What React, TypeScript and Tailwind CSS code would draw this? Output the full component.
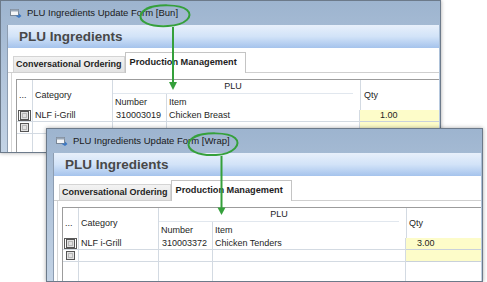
import React from "react";

const FONT = "font-['Liberation_Sans',Arial,sans-serif]";

function FormIcon() {
  return (
    <svg width="12" height="9" viewBox="0 0 12 9" className="shrink-0">
      <rect x="0.5" y="0.5" width="8" height="6" fill="#f4f6f8" stroke="#7a8796" />
      <rect x="0.5" y="0.5" width="8" height="2" fill="#9aa8b8" />
      <path d="M5 6.5 H9 V4.5 L11.5 7 L9 9 Z" fill="#3b78c4" />
    </svg>
  );
}

function RowSel({ focus }: { focus?: boolean }) {
  return (
    <div className="flex h-full items-center justify-center">
      <div className={focus ? "border border-[#5a5a5a] px-[1px]" : "p-[1px]"}>
        <div className="h-[9px] w-[9px] border border-[#555] bg-[#e2e2e2] p-[1px]">
          <div className="h-full w-full border border-[#b8b8b8]" />
        </div>
      </div>
    </div>
  );
}

type WinProps = {
  pos: string;
  tag: string;
  num: string;
  item: string;
  qty: string;
  qtyPad: string;
  qtyLabelPad: string;
};

function Win({ pos, tag, num, item, qty, qtyPad, qtyLabelPad }: WinProps) {
  const v = "border-r border-[#d3dae2]";
  const rowB = "border-b border-[#c9d1da]";
  return (
    <div
      className={`absolute ${pos} flex flex-col border border-[#6c7a8a] bg-gradient-to-b from-[#9db4cf] via-[#b2c5db] to-[#c3d3e5] shadow-[0_0_4px_rgba(0,0,0,0.35)] overflow-hidden ${FONT}`}
    >
      <div className="flex h-[24px] shrink-0 items-center gap-[5px] pl-[9px]">
        <FormIcon />
        <span className="text-[9.5px] leading-none text-[#1a1a1a]">PLU Ingredients Update Form [{tag}]</span>
      </div>
      <div className="ml-[6px] mr-[1px] flex min-h-0 flex-1 flex-col border-l border-[#8d9db1] bg-white">
        <div className="flex h-[23px] shrink-0 items-center bg-gradient-to-b from-[#e8f0fb] via-[#d2e3f8] to-[#a5c3ec] pl-[11px]">
          <span className="text-[13.5px] font-bold leading-none text-[#484848]">PLU Ingredients</span>
        </div>
        <div className="flex h-[25px] shrink-0 items-end border-b border-[#cfcfcf] pl-[5px]">
          <div className="flex h-[16px] items-center border border-b-0 border-[#d4d4d4] bg-gradient-to-b from-[#f3f3f3] to-[#e3e3e3] px-[2px] text-[9px] font-bold text-[#1e1e1e]">
            Conversational Ordering
          </div>
          <div className="relative -mb-px flex h-[21px] items-center border border-b-0 border-[#c4c4c4] bg-white pl-[4px] pr-[8px] text-[9.2px] font-bold text-[#1e1e1e]">
            Production Management
          </div>
        </div>
        <div className="flex min-h-0 flex-1 pl-[3px]">
          <div className="flex min-h-0 flex-1 flex-col border-l border-[#d6d6d6] pl-[4px] pt-[6px]">
            <div className="grid min-h-0 flex-1 grid-cols-[16px_80px_54px_193px_1fr] grid-rows-[14px_16px_12px_12px_1fr] border-l border-t border-[#9c9c9c] text-[9px] leading-none text-[#1e1e1e]">
              <div className={`row-span-2 flex items-center pl-[2px] ${v}`}>...</div>
              <div className={`row-span-2 flex items-center pl-[2px] ${v}`}>Category</div>
              <div className="col-span-2 mr-[7px] flex items-center justify-center border-b border-[#e1e7ee]">PLU</div>
              <div className={`row-span-2 flex items-center border-l border-[#d3dae2] ${qtyLabelPad}`}>Qty</div>
              <div className={`flex items-center pl-[2px] ${v}`}>Number</div>
              <div className="flex items-center pl-[2px]">Item</div>

              <div className={`${v} ${rowB}`}>
                <RowSel focus />
              </div>
              <div className={`flex items-center pl-[2px] ${v} ${rowB}`}>NLF i-Grill</div>
              <div className={`flex items-center justify-end pr-[5px] ${v} ${rowB}`}>{num}</div>
              <div className={`flex items-center pl-[2px] ${v} ${rowB}`}>{item}</div>
              <div className={`flex items-center bg-[#fdfcc9] ${qtyPad} ${rowB}`}>{qty}</div>

              <div className={`${v} ${rowB}`}>
                <RowSel />
              </div>
              <div className={`${v} ${rowB}`} />
              <div className={`${v} ${rowB}`} />
              <div className={`${v} ${rowB}`} />
              <div className={`bg-[#fdfcc9] ${rowB}`} />

              <div className={v} />
              <div className={v} />
              <div className={v} />
              <div className={v} />
              <div />
            </div>
          </div>
        </div>
      </div>
    </div>
  );
}

export default function App() {
  return (
    <div className="relative h-[282px] w-[487px] overflow-hidden bg-white">
      <Win
        pos="left-0 top-0 w-[441px] h-[153px]"
        tag="Bun"
        num="310003019"
        item="Chicken Breast"
        qty="1.00"
        qtyPad="pl-[20px]"
        qtyLabelPad="pl-[3px]"
      />
      <Win
        pos="left-[46px] top-[128px] w-[437px] h-[154px]"
        tag="Wrap"
        num="310003372"
        item="Chicken Tenders"
        qty="3.00"
        qtyPad="pl-[11px]"
        qtyLabelPad="pl-[2px]"
      />
      <svg className="pointer-events-none absolute left-0 top-0" width="487" height="282" viewBox="0 0 487 282">
        <g fill="none" stroke="#35a03b" strokeWidth="2">
          <path d="M146 9 C156 4 180 4 187 10 C194 16 186 25 168 26 C150 27 138 22 141 14 C143 10 148 8 152 7" />
          <path d="M194 137 C204 132 228 132 235 138 C242 144 234 154 216 155 C198 156 186 150 189 142 C191 138 196 136 200 135" />
          <line x1="173" y1="27" x2="173" y2="83" />
          <line x1="221.5" y1="156" x2="221.5" y2="209" />
        </g>
        <g fill="#35a03b">
          <polygon points="169,82 177,82 173,90" />
          <polygon points="217.5,207.5 225.5,207.5 221.5,215" />
        </g>
      </svg>
    </div>
  );
}
